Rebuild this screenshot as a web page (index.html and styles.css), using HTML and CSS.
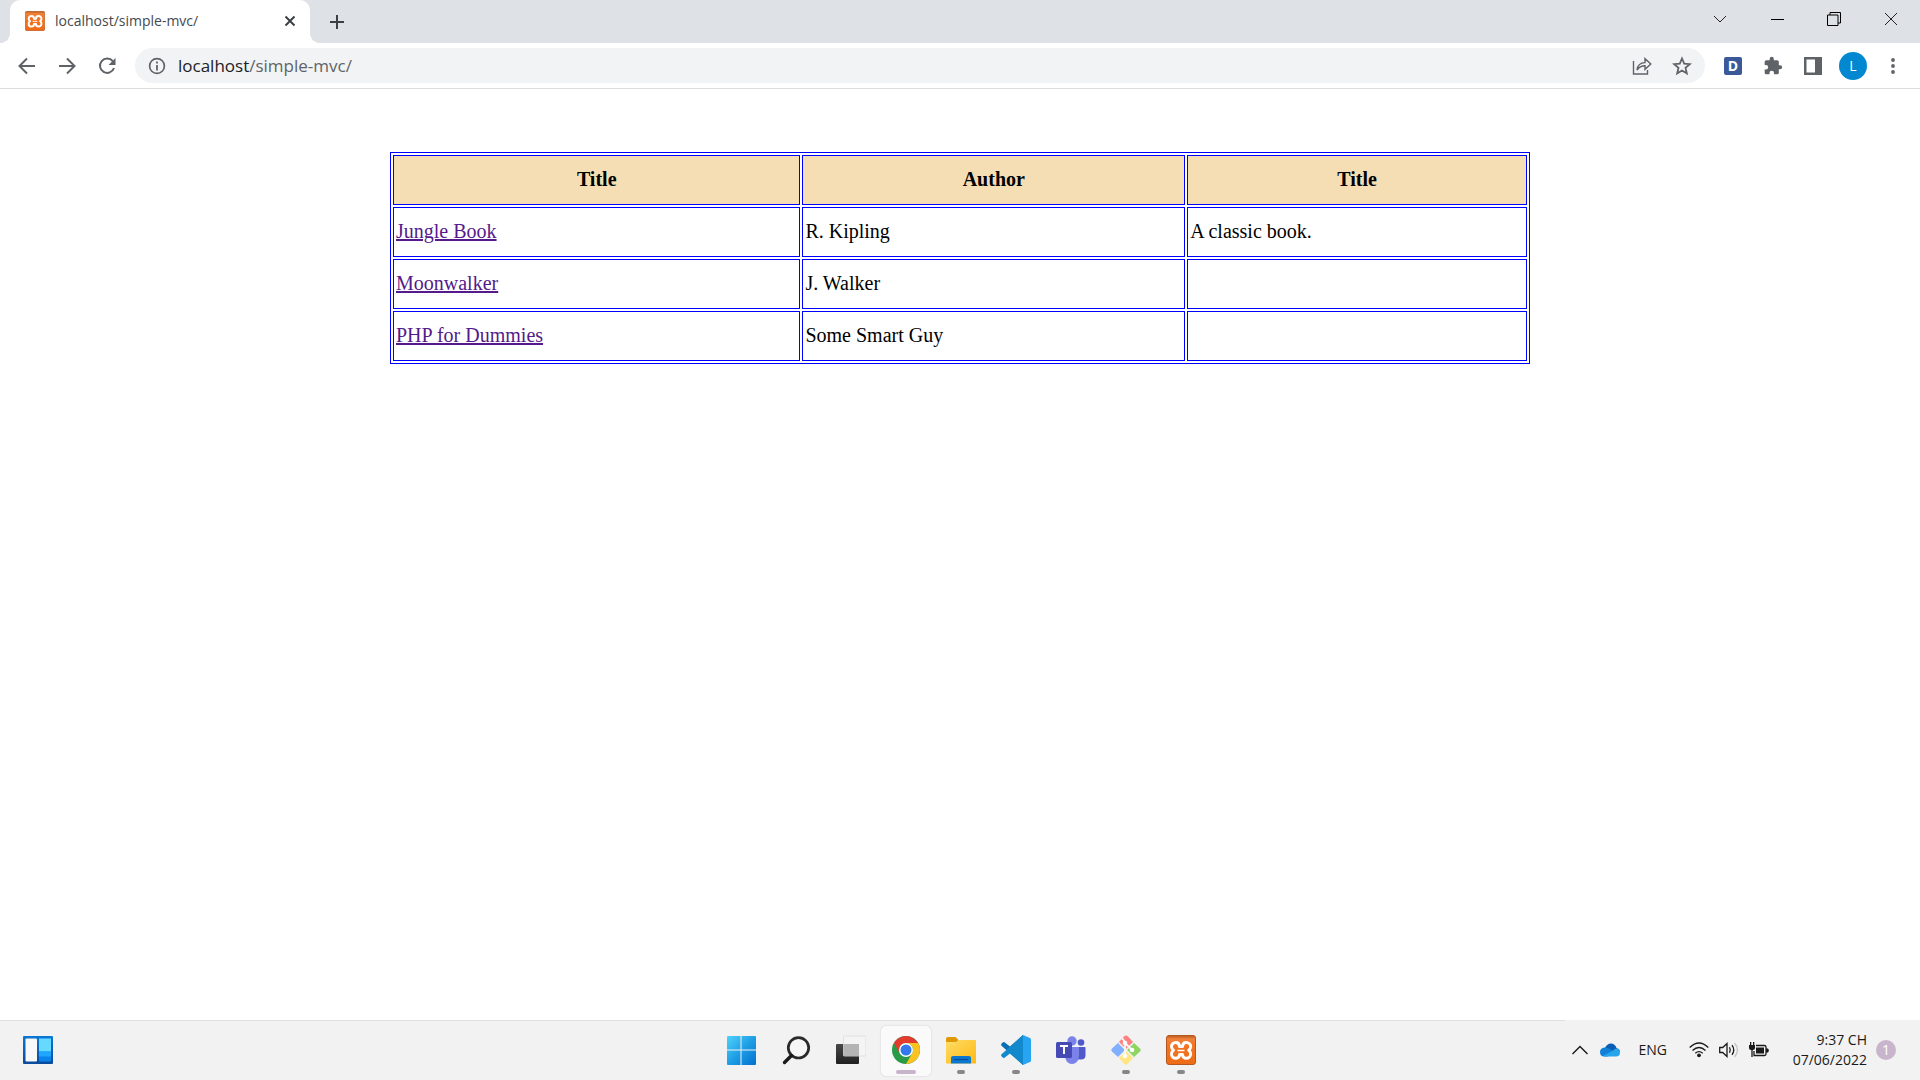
FILE: index.html
```html
<!DOCTYPE html>
<html lang="en">
<head>
<meta charset="utf-8">
<title>localhost/simple-mvc/</title>
<link rel="stylesheet" href="styles.css">
</head>
<body class="desktop">
<svg width="0" height="0" class="defs" aria-hidden="true">
  <defs>
    <linearGradient id="xo" x1="0" y1="0" x2="0" y2="1"><stop offset="0" stop-color="#b85a1c"/><stop offset=".12" stop-color="#f0823c"/><stop offset=".3" stop-color="#f37623"/><stop offset="1" stop-color="#ee6a16"/></linearGradient>
    <linearGradient id="win" x1="0" y1="0" x2="1" y2="1"><stop offset="0" stop-color="#50d2fb"/><stop offset=".5" stop-color="#1f9fe6"/><stop offset="1" stop-color="#0070cf"/></linearGradient>
    <linearGradient id="fold" x1="0" y1="0" x2="1" y2="1"><stop offset="0" stop-color="#ffdc66"/><stop offset="1" stop-color="#fdb913"/></linearGradient>
    <linearGradient id="dark" x1="0" y1="0" x2="0" y2="1"><stop offset="0" stop-color="#484848"/><stop offset="1" stop-color="#202020"/></linearGradient>
    <linearGradient id="wid" x1="0" y1="0" x2="0" y2="1"><stop offset="0" stop-color="#0c78d4"/><stop offset="1" stop-color="#0a4a9c"/></linearGradient>
    <symbol id="xampp" viewBox="0 0 30 30">
      <rect x=".5" y=".5" width="29" height="29" rx="2.500" fill="url(#xo)" stroke="#b5581f"/>
      <path d="M15 11.500H13.500C13.500 9 12 7.400 9.800 7.400C7.500 7.400 5.500 9.300 5.500 11.500C5.500 13.200 6.500 14.500 7.500 15.200C6.200 16 5.500 17.500 5.500 19C5.500 21.500 7.500 23.300 9.800 23.300C12 23.300 13.500 21.700 13.500 19.500H16.500C16.500 21.700 18 23.300 20.200 23.300C22.500 23.300 24.700 21.500 24.700 19C24.700 17.500 24 16 22.700 15.200C23.700 14.500 24.700 13.200 24.700 11.500C24.700 9.300 22.500 7.400 20.200 7.400C18 7.400 16.500 9 16.500 11.500Z" fill="none" stroke="#fff" stroke-width="3" stroke-linejoin="round"/>
      <path d="M11.500 15.500H18.500" stroke="#fff" stroke-width="1.500"/>
    </symbol>
  </defs>
</svg>

<header class="tabstrip">
  <div class="tab">
    <svg class="favicon" width="20" height="20"><use href="#xampp"/></svg>
    <span class="tab-title">localhost/simple-mvc/</span>
    <button class="tab-close" aria-label="Close tab"><svg width="12" height="12" viewBox="0 0 12 12"><path d="M1.500 1.500 10.500 10.500M10.500 1.500 1.500 10.500" stroke="#3c4043" stroke-width="2"/></svg></button>
  </div>
  <button class="new-tab" aria-label="New tab"><svg width="16" height="16" viewBox="0 0 16 16"><path d="M8 1V15M1 8H15" stroke="#3c4043" stroke-width="2"/></svg></button>
  <div class="window-controls">
    <button aria-label="Search tabs"><svg width="14" height="14" viewBox="0 0 14 14"><path d="M1 4 7 10 13 4" fill="none" stroke="#222"/></svg></button>
    <button aria-label="Minimize"><svg width="14" height="14" viewBox="0 0 14 14"><path d="M1 7.500H14" stroke="#000"/></svg></button>
    <button aria-label="Restore"><svg width="14" height="14" viewBox="0 0 14 14"><path d="M.5 3H11V13.500H.5ZM3 3V.500H13.500V11H11" fill="none" stroke="#000"/></svg></button>
    <button aria-label="Close"><svg width="14" height="14" viewBox="0 0 14 14"><path d="M1 1 13 13M13 1 1 13" stroke="#222"/></svg></button>
  </div>
</header>

<nav class="toolbar">
  <button class="tool" aria-label="Back"><svg width="18" height="18" viewBox="0 0 18 18"><path d="M17 9H2M9 1.500 1.500 9 9 16.500" fill="none" stroke="#5f6368" stroke-width="2"/></svg></button>
  <button class="tool" aria-label="Forward"><svg width="18" height="18" viewBox="0 0 18 18"><path d="M1 9H16M9 1.500 16.500 9 9 16.500" fill="none" stroke="#5f6368" stroke-width="2"/></svg></button>
  <button class="tool" aria-label="Reload"><svg width="18" height="18" viewBox="0 0 18 18"><path d="M14.800 4.200A7.200 7.200 0 1 0 16 11" fill="none" stroke="#5f6368" stroke-width="2"/><path d="M17.500 1V8H10.500Z" fill="#5f6368"/></svg></button>
  <div class="omnibox">
    <svg width="18" height="18" viewBox="0 0 18 18"><circle cx="9" cy="9" r="7.400" fill="none" stroke="#5f6368" stroke-width="1.700"/><path d="M9 8V13.500M9 4.500V6.500" stroke="#5f6368" stroke-width="1.800"/></svg>
    <a class="url" href="#"><span class="host">localhost</span>/simple-mvc/</a>
    <button class="tool" aria-label="Share"><svg width="20" height="20" viewBox="0 0 20 20"><path d="M1.500 5V18H15.500V14M5 14C5.500 9.500 8 6.800 13 6.600V2.700L18.800 8 13 13.300V9.800C9.500 9.800 7 11 5 14Z" fill="none" stroke="#5f6368" stroke-width="1.400"/></svg></button>
    <button class="tool" aria-label="Bookmark"><svg width="20" height="20" viewBox="0 0 20 20"><path d="M10 2.500 12.200 7.700 17.800 8.200 13.500 11.900 14.800 17.400 10 14.500 5.200 17.400 6.500 11.900 2.200 8.200 7.800 7.700Z" fill="none" stroke="#5f6368" stroke-width="1.800"/></svg></button>
  </div>
  <button class="tool" aria-label="Dictionary extension"><span class="ext">D</span></button>
  <button class="tool" aria-label="Extensions"><svg width="20" height="20" viewBox="0 0 24 24"><path d="M20.500 11H19V7a2 2 0 0 0-2-2h-4V3.500a2.500 2.500 0 0 0-5 0V5H4a2 2 0 0 0-2 2v3.800h1.500a2.700 2.700 0 0 1 0 5.400H2V20a2 2 0 0 0 2 2h3.800v-1.500a2.700 2.700 0 0 1 5.400 0V22H17a2 2 0 0 0 2-2v-4h1.500a2.500 2.500 0 0 0 0-5Z" fill="#5f6368"/></svg></button>
  <button class="tool" aria-label="Side panel"><svg width="18" height="18" viewBox="0 0 18 18"><path d="M0 0H18V18H0ZM2.500 2.500V15.500H11V2.500Z" fill="#5f6368" fill-rule="evenodd"/></svg></button>
  <button class="tool" aria-label="Profile"><span class="avatar">L</span></button>
  <button class="tool" aria-label="Menu"><svg width="18" height="18" viewBox="0 0 18 18" fill="#5f6368"><circle cx="9" cy="3" r="1.900"/><circle cx="9" cy="9" r="1.900"/><circle cx="9" cy="15" r="1.900"/></svg></button>
</nav>

<main class="page">
  <table class="books">
    <thead>
      <tr><th>Title</th><th>Author</th><th>Title</th></tr>
    </thead>
    <tbody>
      <tr><td><a href="#">Jungle Book</a></td><td>R. Kipling</td><td>A classic book.</td></tr>
      <tr><td><a href="#">Moonwalker</a></td><td>J. Walker</td><td></td></tr>
      <tr><td><a href="#">PHP for Dummies</a></td><td>Some Smart Guy</td><td></td></tr>
    </tbody>
  </table>
</main>

<footer class="taskbar">
  <div class="task-left">
    <button class="widgets" aria-label="Widgets"><svg width="30" height="28" viewBox="0 0 30 28"><rect width="30" height="28" rx="1" fill="url(#wid)"/><rect x="2.500" y="2.500" width="11.500" height="23" rx="1" fill="#f8f8f8"/><rect x="16" y="2.500" width="12" height="23" rx="1" fill="#0a84ea"/><rect x="16" y="2.500" width="12" height="13" fill="#66d9ff"/><rect x="16" y="15.500" width="12" height="5" fill="#1fa6ff"/></svg></button>
  </div>
  <div class="task-apps">
    <button class="app" aria-label="Start"><svg width="30" height="30" viewBox="0 0 30 30"><path d="M1 2a1 1 0 0 1 1-1H14.500V14.500H1ZM15.500 1H29a1 1 0 0 1 1 1V14.500H15.500ZM1 15.500H14.500V30H2a1 1 0 0 1-1-1ZM15.500 15.500H30V29a1 1 0 0 1-1 1H15.500Z" fill="url(#win)"/></svg></button>
    <button class="app" aria-label="Search"><svg width="30" height="30" viewBox="0 0 30 30"><circle cx="17.500" cy="12.800" r="10.200" fill="#f6f6f6" stroke="#2a2a2a" stroke-width="2.700"/><path d="M10.500 20.500 3.500 27.500" stroke="#1a1a1a" stroke-width="3.400" stroke-linecap="round"/></svg></button>
    <button class="app" aria-label="Task view"><svg width="30" height="30" viewBox="0 0 30 30"><rect y="9" width="23" height="20" rx="1" fill="url(#dark)"/><rect x="7.500" y="1" width="22.500" height="20" rx="1" fill="#f4f4f4" stroke="#dcdcdc" stroke-width=".8"/><path d="M7.500 9H23V21H7.500Z" fill="#b4b4b4"/></svg></button>
    <button class="app active" aria-label="Chrome"><svg width="30" height="30" viewBox="-15 -15 30 30"><circle r="14" fill="#2a9a46"/><path d="M-12.120-7A14 14 0 0 1 12.120-7L12.120-7H0A7 7 0 0 0-6.060 3.500Z" fill="#e33b2e"/><path d="M12.120-7A14 14 0 0 1 0 14L6.060 3.500A7 7 0 0 0 0-7Z" fill="#fcc31e"/><circle r="7" fill="#fff"/><circle r="5.500" fill="#3478ee"/></svg><span class="mark"></span></button>
    <button class="app running" aria-label="File Explorer"><svg width="30" height="30" viewBox="0 0 30 30"><path d="M0 3.500Q0 2 1.500 2H9.500L12.500 5V8H0Z" fill="#e09a08"/><path d="M0 7H10L12.500 5H29Q30 5 30 6V28.500H0Z" fill="url(#fold)"/><path d="M5 28.500V23Q5 21 7 21H23Q25 21 25 23V28.500Z" fill="#0a78d0"/><path d="M8 24.500H22" stroke="#044e94" stroke-width="1.200"/></svg><span class="mark"></span></button>
    <button class="app running" aria-label="Visual Studio Code"><svg width="30" height="30" viewBox="0 0 30 30"><path d="M22 0 9 11.500 3.500 7.300Q2.500 6.700 1.700 7.500L.5 8.700Q-.3 9.700.5 10.700L22 30V21.500Z" fill="#0b6fb3"/><path d="M22 30 9 18.500 3.500 22.700Q2.500 23.300 1.700 22.500L.5 21.300Q-.3 20.300.5 19.300L22 0V8.500Z" fill="#1289cc"/><path d="M22 0 29 3Q30 3.500 30 4.500V25.500Q30 26.500 29 27L22 30Z" fill="#27a5f2"/></svg><span class="mark"></span></button>
    <button class="app" aria-label="Teams"><svg width="30" height="30" viewBox="0 0 30 30"><circle cx="25" cy="7.500" r="3.300" fill="#5059c9"/><path d="M20 12H28.500Q29.500 12 29.500 13V20Q29.500 24.500 25 24.500H20Z" fill="#5059c9"/><circle cx="16" cy="6" r="4.700" fill="#7b83eb"/><path d="M9 12H23V21Q22 29 16 29Q10 29 9 21Z" fill="#7b83eb"/><rect y="7" width="16" height="16" rx="1.500" fill="#464ab5"/><path d="M4 11H12M8 11V19" stroke="#fff" stroke-width="2"/></svg></button>
    <button class="app running" aria-label="Git Bash"><svg width="30" height="30" viewBox="0 0 30 30"><path d="M7.500 7.500 13 1.500Q15-.5 17 1.500L22.500 7.500 15 15Z" fill="#ff8080"/><path d="M22.500 7.500 29 13.500Q30.500 15 29 16.500L22.500 22.500 15 15Z" fill="#8fd562"/><path d="M22.500 22.500 16.500 29Q15 30.500 13.500 29L7.500 22.500 15 15Z" fill="#ffe684"/><path d="M7.500 22.500 1 16.500Q-.5 15 1 13.500L7.500 7.500 15 15Z" fill="#80b0ff"/><path d="M7.500 7.500 22.500 22.500M22.500 7.500 7.500 22.500" stroke="#f2f2f2" stroke-width="1.500"/><path d="M11 3 14 7V21M14 8 21 15" fill="none" stroke="#f7f7f7" stroke-width="1.800"/><g fill="#fff"><circle cx="14" cy="8" r="2.300"/><circle cx="21" cy="15" r="2.300"/><circle cx="14" cy="21" r="2.300"/></g></svg><span class="mark"></span></button>
    <button class="app running" aria-label="XAMPP"><svg width="30" height="30"><use href="#xampp"/></svg><span class="mark"></span></button>
  </div>
  <div class="task-tray">
    <button class="chevron" aria-label="Hidden icons"><svg width="16" height="10" viewBox="0 0 16 10"><path d="M.5 9 8 1.500 15.500 9" fill="none" stroke="#1a1a1a" stroke-width="1.400"/></svg></button>
    <svg class="cloud" width="20" height="14" viewBox="0 0 20 14"><path d="M5 5Q7 .5 11 .5Q15 .5 16.500 5Q20 6 20 9L10 10 1 9Q2 5 5 5Z" fill="#0a5fb4"/><path d="M4.500 4.500Q7 4 10 6L14 9 8 13.500H4.500Q0 13.500 0 9Q0 5 4.500 4.500Z" fill="#1080d8"/><path d="M3 13 13 7.500Q15 5 17 5.500Q20 6.500 20 9.500Q20 13.500 16 13.500H5Z" fill="#28a4ec"/></svg>
    <span class="lang">ENG</span>
    <button class="status" aria-label="Network, sound and battery">
      <svg width="20" height="16" viewBox="0 0 20 16"><path d="M.7 5.500Q10-3.500 19.300 5.500M3.500 8.500Q10 2.500 16.500 8.500M6.300 11.300Q10 8 13.700 11.300" fill="none" stroke="#1a1a1a" stroke-width="1.300"/><circle cx="10" cy="13.300" r="1.900" fill="#1a1a1a"/></svg>
      <svg width="20" height="16" viewBox="0 0 20 16"><path d="M.7 5.500H3.700L8 1.500V14.500L3.700 10.500H.7ZM10.500 5.300Q12 8 10.500 10.700M13 3.200Q16.500 8 13 12.800" fill="none" stroke="#1a1a1a" stroke-width="1.300"/><path d="M15.500 1Q21.500 8 15.500 15" fill="none" stroke="#c4c4c4" stroke-width="1.300"/></svg>
      <svg width="20" height="16" viewBox="0 0 20 16"><path d="M7 3.500H15.500Q17 3.500 17 5V12Q17 13.500 15.500 13.500H5V9" fill="none" stroke="#1a1a1a" stroke-width="1.300"/><path d="M7 5.500H15V11.500H7ZM17 6.500H19L20 8.500 19 10.500H17ZM0 3H6V6Q6 8 4 8H2Q0 8 0 6ZM1 0H2.300V3H1ZM4 0H5.300V3H4Z" fill="#1a1a1a"/><path d="M3 8V15" stroke="#1a1a1a" stroke-width="1.300"/></svg>
    </button>
    <div class="clock"><span>9:37 CH</span><span>07/06/2022</span></div>
    <span class="badge">1</span>
  </div>
</footer>
</body>
</html>
```
FILE: styles.css
```css
* { box-sizing: border-box; }

.desktop {
  margin: 0;
  min-height: 100vh;
  display: flex;
  flex-direction: column;
  background: #fff;
  font-family: "Open Sans", "Noto Sans", sans-serif;
}

.defs { position: absolute; }

svg { display: block; flex: none; }

button {
  display: flex;
  align-items: center;
  justify-content: center;
  padding: 0;
  border: 0;
  background: none;
  font: inherit;
}

/* Tab strip */
.tabstrip {
  display: flex;
  height: 43px;
  padding-left: 10px;
  background: #dee1e6;
}

.tab {
  position: relative;
  display: flex;
  align-items: center;
  width: 300px;
  padding: 0 14px 2px 15px;
  gap: 10px;
  border-radius: 10px 10px 0 0;
  background: #fff;
}

.tab::before,
.tab::after {
  content: "";
  position: absolute;
  bottom: 0;
  width: 10px;
  height: 10px;
}

.tab::before {
  left: -10px;
  background: radial-gradient(circle at 0 0, transparent 10px, #fff 10px);
}

.tab::after {
  right: -10px;
  background: radial-gradient(circle at 100% 0, transparent 10px, #fff 10px);
}

.tab-title {
  flex: 1;
  font-size: 14px;
  line-height: 20px;
  color: #45494d;
}

.new-tab { width: 54px; }

.window-controls {
  display: flex;
  height: 37px;
  margin-left: auto;
  padding-right: 1px;
}

.window-controls button { width: 57px; }

/* Toolbar */
.toolbar {
  display: flex;
  align-items: center;
  height: 46px;
  padding: 0 7px;
  border-bottom: 1px solid #dadce0;
}

.tool {
  width: 40px;
  height: 35px;
}

.omnibox {
  flex: 1;
  display: flex;
  align-items: center;
  height: 35px;
  margin: 0 8px;
  padding: 0 3px 0 13px;
  border-radius: 18px;
  background: #f1f3f4;
}

.url {
  flex: 1;
  margin-left: 12px;
  font-size: 17px;
  line-height: 24px;
  color: #5f6368;
  text-decoration: none;
}

.host { color: #202124; }

.ext {
  width: 18px;
  height: 18px;
  border-radius: 2px;
  background: #3b5998;
  color: #fff;
  font-size: 14px;
  font-weight: 700;
  line-height: 18px;
}

.avatar {
  width: 28px;
  height: 28px;
  border-radius: 50%;
  background: #0288d1;
  color: #fff;
  font-size: 14px;
  line-height: 28px;
}

/* Book list */
.page {
  flex: 1;
  padding: 63px 10px 0;
}

.books {
  width: 60%;
  margin: 0 auto;
  border: 1px solid #00f;
  border-spacing: 2px;
  font-family: "Liberation Serif", "Times New Roman", serif;
  font-size: 20px;
  line-height: 22px;
  color: #000;
}

.books th,
.books td {
  height: 50px;
  padding: 0 2px 2px;
  border: 1px solid #00f;
}

.books th { background: #f5deb3; }
.books a { color: #551a8b; }

/* Taskbar */
.taskbar {
  display: grid;
  grid-template-columns: 1fr auto 1fr;
  height: 60px;
  border-top: 1px solid #e0e0e0;
  background: #f2f2f2;
}

.task-left {
  display: flex;
  padding: 0 0 2px 23px;
}

.task-apps {
  display: flex;
  align-items: center;
  gap: 5px;
  padding-left: 2px;
}

.app {
  position: relative;
  width: 50px;
  height: 50px;
  padding-bottom: 2px;
  border-radius: 5px;
}

.active {
  background: #fafafa;
  box-shadow: 0 0 2px #ccc;
}

.mark {
  position: absolute;
  bottom: 2px;
  left: 21px;
  width: 8px;
  height: 4px;
  border-radius: 2px;
  background: #878787;
}

.active .mark {
  left: 15px;
  width: 20px;
  background: #c8b4ca;
}

.task-tray {
  justify-self: end;
  display: flex;
  align-items: center;
  margin-top: -1px;
  padding: 0 24px 0 7px;
  background: #f2f2f2;
  color: #1a1a1a;
  font-size: 14px;
  line-height: 20px;
}

.cloud { margin-left: 12px; }
.lang { margin-left: 19px; }

.status {
  gap: 10px;
  margin-left: 22px;
}

.clock {
  display: flex;
  flex-direction: column;
  width: 98px;
  text-align: right;
}

.badge {
  width: 20px;
  height: 20px;
  margin-left: 9px;
  border-radius: 50%;
  background: #c9b5cb;
  color: #fff;
  font-size: 14px;
  text-align: center;
}
```
